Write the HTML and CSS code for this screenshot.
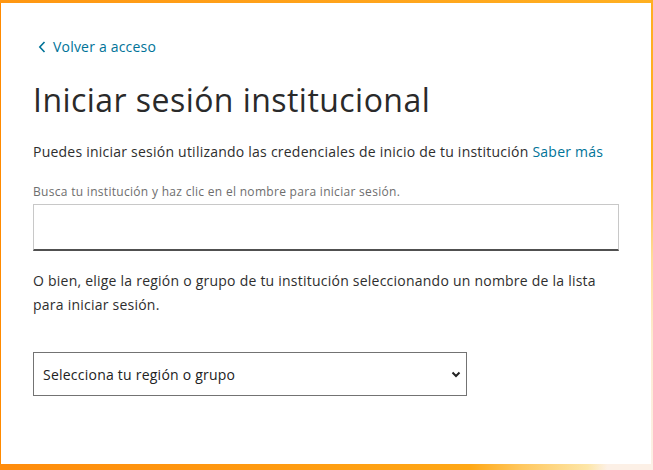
FILE: index.html
```html
<!DOCTYPE html>
<html lang="es">
<head>
<meta charset="utf-8">
<title>Iniciar sesión institucional</title>
<link rel="stylesheet" href="styles.css">
</head>
<body>
<main class="card">
  <a class="back-link" href="#">
    <svg class="back-icon" width="8" height="12" viewBox="0 0 8 12" aria-hidden="true"><path d="M6.5 1 L1.8 6 L6.5 11" fill="none" stroke="currentColor" stroke-width="1.6"/></svg>
    <span>Volver a acceso</span>
  </a>
  <h1 class="title">Iniciar sesión institucional</h1>
  <p class="intro">Puedes iniciar sesión utilizando las credenciales de inicio de tu institución <a class="link" href="#">Saber más</a></p>
  <label class="field-label" for="inst">Busca tu institución y haz clic en el nombre para iniciar sesión.</label>
  <input class="search-input" id="inst" type="text">
  <p class="alt-text">O bien, elige la región o grupo de tu institución seleccionando un nombre de la lista para iniciar sesión.</p>
  <div class="select-box">
    <span>Selecciona tu región o grupo</span>
    <svg class="select-chevron" width="10" height="7" viewBox="0 0 10 7" aria-hidden="true"><path d="M1.5 1.5 L5 5 L8.5 1.5" fill="none" stroke="#222" stroke-width="2"/></svg>
  </div>
</main>
</body>
</html>
```
FILE: styles.css
```css
html, body {
  margin: 0;
  padding: 0;
}
body {
  width: 653px;
  height: 470px;
  overflow: hidden;
  box-sizing: border-box;
  padding: 3px 2px 6px 1px;
  font-family: "Open Sans", "Noto Sans", sans-serif;
  color: #2e2e2e;
  background:
    linear-gradient(to right, #ff9712 0%, #ffa51c 60%, #ffb021 100%) top / 100% 3px no-repeat,
    linear-gradient(to right, #ff8c0c 0%, #ff9a10 40%, #ffa816 72%, #ffc860 80%, #fde6a8 90%, #fcf0e6 93%, #fcf0e6 100%) bottom / 100% 6px no-repeat,
    linear-gradient(to bottom, #ffae20 0%, #ffb124 35%, #ffdc9a 55%, #fdebd0 72%, #fcf0e6 100%) right / 2px 100% no-repeat,
    #ff8a00;
}
.card {
  display: flex;
  flex-direction: column;
  align-items: flex-start;
  box-sizing: border-box;
  height: 461px;
  background: #fff;
  padding: 34px 32px 0 32px;
}
.back-link {
  display: flex;
  align-items: center;
  gap: 7px;
  font-size: 14px;
  line-height: 20px;
  letter-spacing: 0.2px;
  color: #007398;
  text-decoration: none;
  margin-left: 5px;
}
.back-icon {
  display: block;
}
.title {
  margin: 23px 0 0 0;
  font-size: 32px;
  font-weight: 400;
  line-height: 40px;
  letter-spacing: 0.45px;
  color: #2a2a2a;
}
.intro {
  margin: 20px 0 0 0;
  font-size: 14px;
  line-height: 24px;
  letter-spacing: 0.23px;
}
.link {
  color: #007398;
  text-decoration: none;
}
.field-label {
  margin-top: 19px;
  font-size: 12px;
  line-height: 18px;
  letter-spacing: 0.3px;
  color: #6e6e6e;
}
.search-input {
  margin: 3px 0 0 0;
  box-sizing: border-box;
  width: 586px;
  height: 47px;
  border: 1px solid #c8c8c8;
  border-bottom: 2px solid #505050;
  padding: 0 10px;
  font: inherit;
  outline: none;
}
.alt-text {
  margin: 18px 0 0 0;
  font-size: 14px;
  line-height: 24px;
  letter-spacing: 0.23px;
  max-width: 586px;
}
.select-box {
  margin-top: 35px;
  box-sizing: border-box;
  width: 434px;
  height: 44px;
  border: 1px solid #737373;
  display: flex;
  align-items: center;
  justify-content: space-between;
  padding: 0 5px 0 9px;
  font-size: 14px;
  letter-spacing: 0.23px;
  color: #222;
}
.select-chevron {
  display: block;
}
```
